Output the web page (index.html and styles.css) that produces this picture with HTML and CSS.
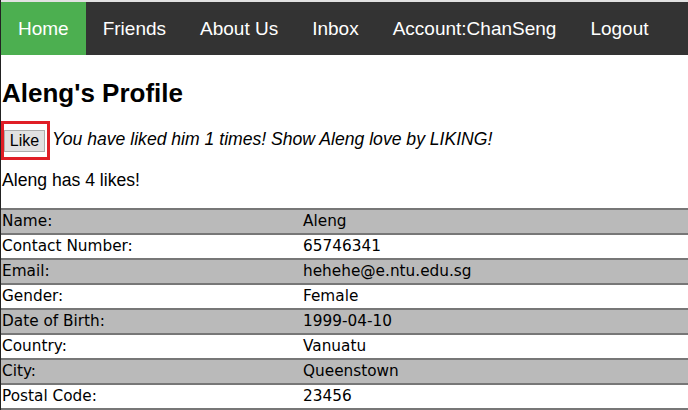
FILE: index.html
```html
<!DOCTYPE html>
<html>
<head>
<meta charset="utf-8">
<link rel="stylesheet" href="styles.css">
</head>
<body>
<div class="page">
  <nav class="topnav">
    <a class="active" href="#">Home</a>
    <a href="#">Friends</a>
    <a href="#">About Us</a>
    <a href="#">Inbox</a>
    <a href="#">Account:ChanSeng</a>
    <a href="#">Logout</a>
  </nav>
  <h1 class="title">Aleng's Profile</h1>
  <div class="like-row">
    <span class="like-box"><button class="like-btn">Like</button></span>
    <em class="like-msg">You have liked him 1 times! Show Aleng love by LIKING!</em>
  </div>
  <p class="likes">Aleng has 4 likes!</p>
  <table class="info">
    <tr><td class="k">Name:</td><td>Aleng</td></tr>
    <tr><td class="k">Contact Number:</td><td>65746341</td></tr>
    <tr><td class="k">Email:</td><td>hehehe@e.ntu.edu.sg</td></tr>
    <tr><td class="k">Gender:</td><td>Female</td></tr>
    <tr><td class="k">Date of Birth:</td><td>1999-04-10</td></tr>
    <tr><td class="k">Country:</td><td>Vanuatu</td></tr>
    <tr><td class="k">City:</td><td>Queenstown</td></tr>
    <tr><td class="k">Postal Code:</td><td>23456</td></tr>
  </table>
</div>
</body>
</html>
```
FILE: styles.css
```css
html, body {
  margin: 0;
  padding: 0;
  background: #fff;
}
body {
  font-family: "Liberation Sans", Arial, sans-serif;
  color: #000;
}
.page {
  border-left: 1px solid #222;
  min-height: 410px;
  box-sizing: border-box;
}
.topnav {
  display: flex;
  background: #333;
  border-top: 2px solid #e2e2e2;
  height: 53px;
}
.topnav a {
  display: flex;
  align-items: center;
  padding: 0 17px;
  color: #fff;
  text-decoration: none;
  font-size: 19px;
}
.topnav a.active {
  background: #4caf50;
}
.title {
  font-size: 26px;
  font-weight: bold;
  margin: 23px 0 0 1px;
  line-height: 30px;
}
.like-row {
  display: flex;
  align-items: center;
  margin-top: 13px;
}
.like-box {
  display: inline-flex;
  align-items: flex-start;
  border: 3px solid #e01e26;
  width: 43px;
  height: 33px;
  box-sizing: content-box;
}
.like-btn {
  font-family: "Liberation Sans", Arial, sans-serif;
  font-size: 16px;
  background: #e1e1e1;
  border: 1px solid #adadad;
  padding: 0;
  width: 41px;
  height: 22px;
  margin: 6px 0 0 0;
  color: #000;
}
.like-msg {
  font-size: 17.6px;
  margin-left: 2px;
  margin-top: -2px;
}
.likes {
  font-size: 17.6px;
  margin: 10px 0 0 1px;
  line-height: 20px;
}
.info {
  width: 100%;
  border-collapse: collapse;
  margin-top: 18px;
  font-family: "DejaVu Sans", Verdana, sans-serif;
  font-size: 15.3px;
}
.info tr {
  height: 25px;
}
.info tr:nth-child(odd) {
  background: #bababa;
}
.info td {
  border-top: 2px solid #777;
  padding: 0 1px;
  line-height: 21px;
}
.info tr:last-child td {
  border-bottom: 2px solid #777;
}
.info td.k {
  width: 299px;
}
```
